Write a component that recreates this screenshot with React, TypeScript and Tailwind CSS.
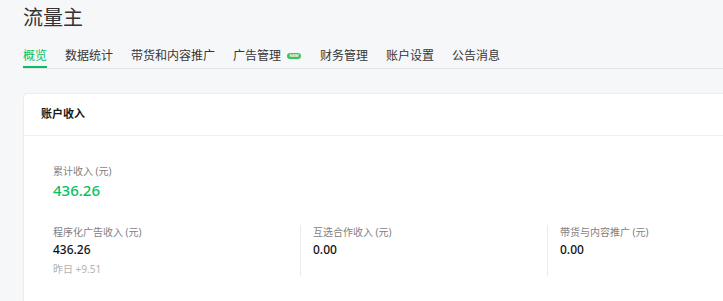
import React from "react";

const tabs = ["概览", "数据统计", "带货和内容推广", "广告管理", "财务管理", "账户设置", "公告消息"];

export default function App() {
  return (
    <div
      className="w-[723px] h-[301px] overflow-hidden bg-[#f6f7f9] pl-[23px]"
      style={{ fontFamily: '"Noto Sans", "Noto Sans CJK SC", sans-serif' }}
    >
      <div className="pt-[4px] h-[36px] text-[20px] leading-[28px] text-[#333]">流量主</div>
      <div className="mt-[9px] flex items-end border-b border-[#e2e3e5] w-[760px]">
        {tabs.map((t, i) => (
          <div key={t} className="flex items-center mr-[18px]">
            <div
              className={
                i === 0
                  ? "h-[23px] flex items-center border-b-2 border-[#07c160] text-[#07c160] text-[12px] leading-[21px]"
                  : "h-[23px] flex items-center border-b-2 border-transparent text-[#353535] text-[12px] leading-[21px]"
              }
            >
              {t}
            </div>
            {t === "广告管理" && (
              <div className="ml-[6px] mr-[1px] mb-[2px] h-[6px] w-[14px] rounded-full bg-[#3cc06a] flex items-center justify-center">
                <span className="text-[4px] leading-[4px] text-white font-bold">NEW</span>
              </div>
            )}
          </div>
        ))}
      </div>
      <div className="mt-[24px] w-[800px] bg-white border border-[#ececec] rounded-[4px]">
        <div className="h-[42px] flex items-center pl-[17px] border-b border-[#f0f0f0] text-[11px] font-semibold text-[#191919]">
          账户收入
        </div>
        <div className="pl-[29px] pt-[28px]">
          <div className="text-[10px] leading-[14px] text-[#7f7f7f]">累计收入 (元)</div>
          <div className="mt-[2px] text-[15px] leading-[20px] font-medium text-[#07c160]">436.26</div>
          <div className="mt-[25px] flex">
            <div className="w-[247px] shrink-0">
              <div className="text-[10px] leading-[14px] text-[#7f7f7f]">程序化广告收入 (元)</div>
              <div className="mt-[2px] text-[12px] leading-[18px] font-medium text-[#111]">436.26</div>
              <div className="mt-[3px] text-[10px] leading-[14px] text-[#b2b2b2]">昨日 +9.51</div>
            </div>
            <div className="w-[247px] shrink-0 border-l border-[#ebebeb] pl-[12px]">
              <div className="text-[10px] leading-[14px] text-[#7f7f7f]">互选合作收入 (元)</div>
              <div className="mt-[2px] text-[12px] leading-[18px] font-medium text-[#111]">0.00</div>
            </div>
            <div className="w-[247px] shrink-0 border-l border-[#ebebeb] pl-[12px]">
              <div className="text-[10px] leading-[14px] text-[#7f7f7f]">带货与内容推广 (元)</div>
              <div className="mt-[2px] text-[12px] leading-[18px] font-medium text-[#111]">0.00</div>
            </div>
          </div>
          <div className="h-[40px]" />
        </div>
      </div>
    </div>
  );
}
